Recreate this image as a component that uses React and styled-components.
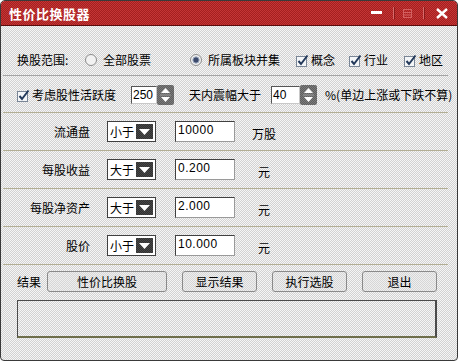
import React from "react";
import styled, { createGlobalStyle } from "styled-components";

const dither = (a, b) =>
  `repeating-conic-gradient(${a} 0 25%, ${b} 0 50%) 0 0 / 2px 2px`;

const GlobalStyle = createGlobalStyle`
  body {
    margin: 0;
    background: #ffffff;
    font-family: "Liberation Sans", "Noto Sans CJK SC", sans-serif;
    font-size: 12px;
    color: #000;
  }
`;

const Window = styled.div`
  width: 458px;
  height: 361px;
  box-sizing: border-box;
  border: 1px solid #3a3a3a;
  border-radius: 5px 5px 4px 4px;
  overflow: hidden;
  background: ${dither("#d2d2d2", "#f6f6f6")};
  display: flex;
  flex-direction: column;
`;

const TitleBar = styled.div`
  height: 24px;
  flex: none;
  border-bottom: 1px solid #5a0c0c;
  background: ${dither("#a41f1f", "#c43636")};
  display: flex;
  align-items: center;
  padding: 0 9px 0 8px;
  color: #fff;
`;

const Title = styled.div`
  flex: 1;
  font-family: "Noto Sans CJK SC", sans-serif;
  font-size: 13px;
  font-weight: 700;
  letter-spacing: 0.5px;
`;

const WinButtons = styled.div`
  display: flex;
  align-items: center;
`;

const WinSep = styled.div`
  width: 1px;
  height: 12px;
  margin: 0 ${(p) => p.$mr}px 0 ${(p) => p.$ml}px;
  background: #d86a6a;
  box-shadow: 1px 0 0 #8a1a1a;
`;

const Body = styled.div`
  padding: 0 9px 0 2px;
  display: flex;
  flex-direction: column;
`;

const Section = styled.div`
  display: flex;
  align-items: center;
  box-sizing: border-box;
  padding: ${(p) => p.$pad || "0 0 0 14px"};
  height: ${(p) => p.$h || "auto"};
  border-bottom: 1px solid ${(p) => p.$line || "#b2ae94"};
`;

const Text = styled.span`
  font-family: "Noto Sans CJK SC", sans-serif;
  font-size: 12px;
  line-height: 16px;
  white-space: nowrap;
  margin-left: ${(p) => p.$ml || 0}px;
  width: ${(p) => (p.$w ? `${p.$w}px` : "auto")};
  text-align: ${(p) => p.$align || "left"};
  padding-top: ${(p) => p.$pt || 0}px;
  flex: none;
`;

const Option = styled.label`
  display: flex;
  align-items: center;
  gap: ${(p) => p.$gap || 4}px;
  margin-left: ${(p) => p.$ml || 0}px;
  flex: none;
`;

const SpinWrap = styled.div`
  display: flex;
  align-items: center;
  margin-left: ${(p) => p.$ml || 0}px;
  height: 20px;
`;

const SpinInput = styled.div`
  width: ${(p) => p.$w}px;
  height: 18px;
  box-sizing: border-box;
  background: #fff;
  border: 1px solid #555;
  border-right-color: #c8c8c8;
  border-bottom-color: #c8c8c8;
  font-size: 12px;
  line-height: 14px;
  padding: 1px 0 0 1px;
`;

const SpinBtn = styled.div`
  width: 17px;
  height: 20px;
  display: flex;
  align-items: center;
  justify-content: center;
  border-radius: 2px;
  background: ${dither("#5e5e5e", "#7c7c7c")};
`;

const Select = styled.div`
  width: 49px;
  height: 21px;
  box-sizing: border-box;
  margin-left: 17px;
  background: #fff;
  border: 1px solid #404040;
  display: flex;
  align-items: center;
  justify-content: space-between;
  padding: 0 2px 0 2px;
  font-family: "Noto Sans CJK SC", sans-serif;
  font-size: 12px;
`;

const DropBtn = styled.div`
  width: 17px;
  height: 15px;
  background: ${dither("#303030", "#4a4a4a")};
  display: flex;
  align-items: center;
  justify-content: center;
`;

const Field = styled.div`
  width: 60px;
  height: 21px;
  box-sizing: border-box;
  margin-left: 19px;
  background: #fff;
  border: 1px solid #404040;
  border-right-color: #9a9a9a;
  border-bottom-color: #9a9a9a;
  font-size: 12px;
  line-height: 17px;
  padding-left: 2px;
  letter-spacing: 0.5px;
`;

const Button = styled.div`
  width: ${(p) => p.$w}px;
  height: 21px;
  box-sizing: border-box;
  margin-left: ${(p) => p.$ml}px;
  border: 1px solid #8a8a8a;
  border-radius: 3px;
  background: ${dither("#d6d6d6", "#efefef")};
  display: flex;
  align-items: center;
  justify-content: center;
  font-family: "Noto Sans CJK SC", sans-serif;
  font-size: 12px;
`;

const ResultBox = styled.div`
  margin: 8px 0 0 14px;
  width: 420px;
  height: 38px;
  box-sizing: border-box;
  border: 2px solid #4a4a4a;
  border-bottom-color: #6e6e4a;
  border-width: 1px 2px 2px 1px;
`;

const Bottom = styled.div`
  padding: 6px 0 0 14px;
`;

const ButtonRow = styled.div`
  display: flex;
  align-items: center;
  height: 21px;
`;

function Check() {
  return (
    <svg width="13" height="13" viewBox="0 0 13 13">
      <rect x="0.5" y="2.5" width="10" height="10" fill="#f4f6f8" stroke="#7a8696" />
      <path d="M2.5 7 L5 10 L11.5 1.5" fill="none" stroke="#23395a" strokeWidth="2" />
    </svg>
  );
}

function Radio({ on }) {
  return (
    <svg width="12" height="12" viewBox="0 0 12 12">
      <circle cx="6" cy="6" r="5.5" fill="#f2f2f2" stroke="#8c8c8c" />
      {on && <circle cx="6" cy="6" r="3.2" fill="#3c4a6c" stroke="#a8b4c8" strokeWidth="1" />}
    </svg>
  );
}

function SpinArrows() {
  return (
    <svg width="13" height="18" viewBox="0 0 13 18">
      <path d="M6.5 2 L11 7 L2 7 Z" fill="#fff" />
      <path d="M1 9 L12 9" stroke="#9a9a9a" />
      <path d="M2 11 L11 11 L6.5 16 Z" fill="#fff" />
    </svg>
  );
}

function Spin({ value, w, ml }) {
  return (
    <SpinWrap $ml={ml}>
      <SpinInput $w={w}>{value}</SpinInput>
      <SpinBtn>
        <SpinArrows />
      </SpinBtn>
    </SpinWrap>
  );
}

function Dropdown({ value }) {
  return (
    <Select>
      <span>{value}</span>
      <DropBtn>
        <svg width="11" height="6" viewBox="0 0 11 6">
          <path d="M0 0 L11 0 L5.5 6 Z" fill="#fff" />
        </svg>
      </DropBtn>
    </Select>
  );
}

function FilterRow({ label, op, value, unit }) {
  return (
    <Section $h="38px" $pad="0">
      <Text $w={87} $align="right">{label}</Text>
      <Dropdown value={op} />
      <Field>{value}</Field>
      <Text $w={58} $align="center" $pt={5}>{unit}</Text>
    </Section>
  );
}

export default function App() {
  return (
    <>
      <GlobalStyle />
      <Window>
        <TitleBar>
          <Title>性价比换股器</Title>
          <WinButtons>
            <svg width="11" height="4" viewBox="0 0 11 4">
              <rect x="0" y="0" width="11" height="3" fill="#fff" />
            </svg>
            <WinSep $ml={11} $mr={9} />
            <svg width="9" height="9" viewBox="0 0 9 9">
              <rect x="0.5" y="0.5" width="8" height="8" fill="none" stroke="#d46060" />
              <path d="M1 3.5 L8 3.5 M1 6 L8 6" stroke="#d46060" />
            </svg>
            <WinSep $ml={11} $mr={12} />
            <svg width="12" height="11" viewBox="0 0 12 11">
              <path d="M1 1 L11 10 M11 1 L1 10" stroke="#fff" strokeWidth="2.4" />
            </svg>
          </WinButtons>
        </TitleBar>
        <Body>
          <Section $pad="26px 0 7px 14px" $line="#a4a4a4">
            <Text $w={68}>换股范围:</Text>
            <Option $gap={6}>
              <Radio />
              <Text>全部股票</Text>
            </Option>
            <Option $gap={6} $ml={39}>
              <Radio on />
              <Text>所属板块并集</Text>
            </Option>
            <Option $gap={2} $ml={16}>
              <Check />
              <Text>概念</Text>
            </Option>
            <Option $gap={2} $ml={14}>
              <Check />
              <Text>行业</Text>
            </Option>
            <Option $gap={2} $ml={16}>
              <Check />
              <Text>地区</Text>
            </Option>
          </Section>
          <Section $pad="9px 0 7px 14px">
            <Option $gap={2}>
              <Check />
              <Text>考虑股性活跃度</Text>
            </Option>
            <Spin value="250" w={26} ml={15} />
            <Text $ml={15}>天内震幅大于</Text>
            <Spin value="40" w={29} ml={10} />
            <Text $ml={8}>%(单边上涨或下跌不算)</Text>
          </Section>
          <FilterRow label="流通盘" op="小于" value="10000" unit="万股" />
          <FilterRow label="每股收益" op="大于" value="0.200" unit="元" />
          <FilterRow label="每股净资产" op="大于" value="2.000" unit="元" />
          <FilterRow label="股价" op="小于" value="10.000" unit="元" />
          <Bottom>
            <ButtonRow>
              <Text>结果</Text>
              <Button $w={120} $ml={6}>性价比换股</Button>
              <Button $w={75} $ml={15}>显示结果</Button>
              <Button $w={75} $ml={15}>执行选股</Button>
              <Button $w={75} $ml={15}>退出</Button>
            </ButtonRow>
          </Bottom>
          <ResultBox />
        </Body>
      </Window>
    </>
  );
}
